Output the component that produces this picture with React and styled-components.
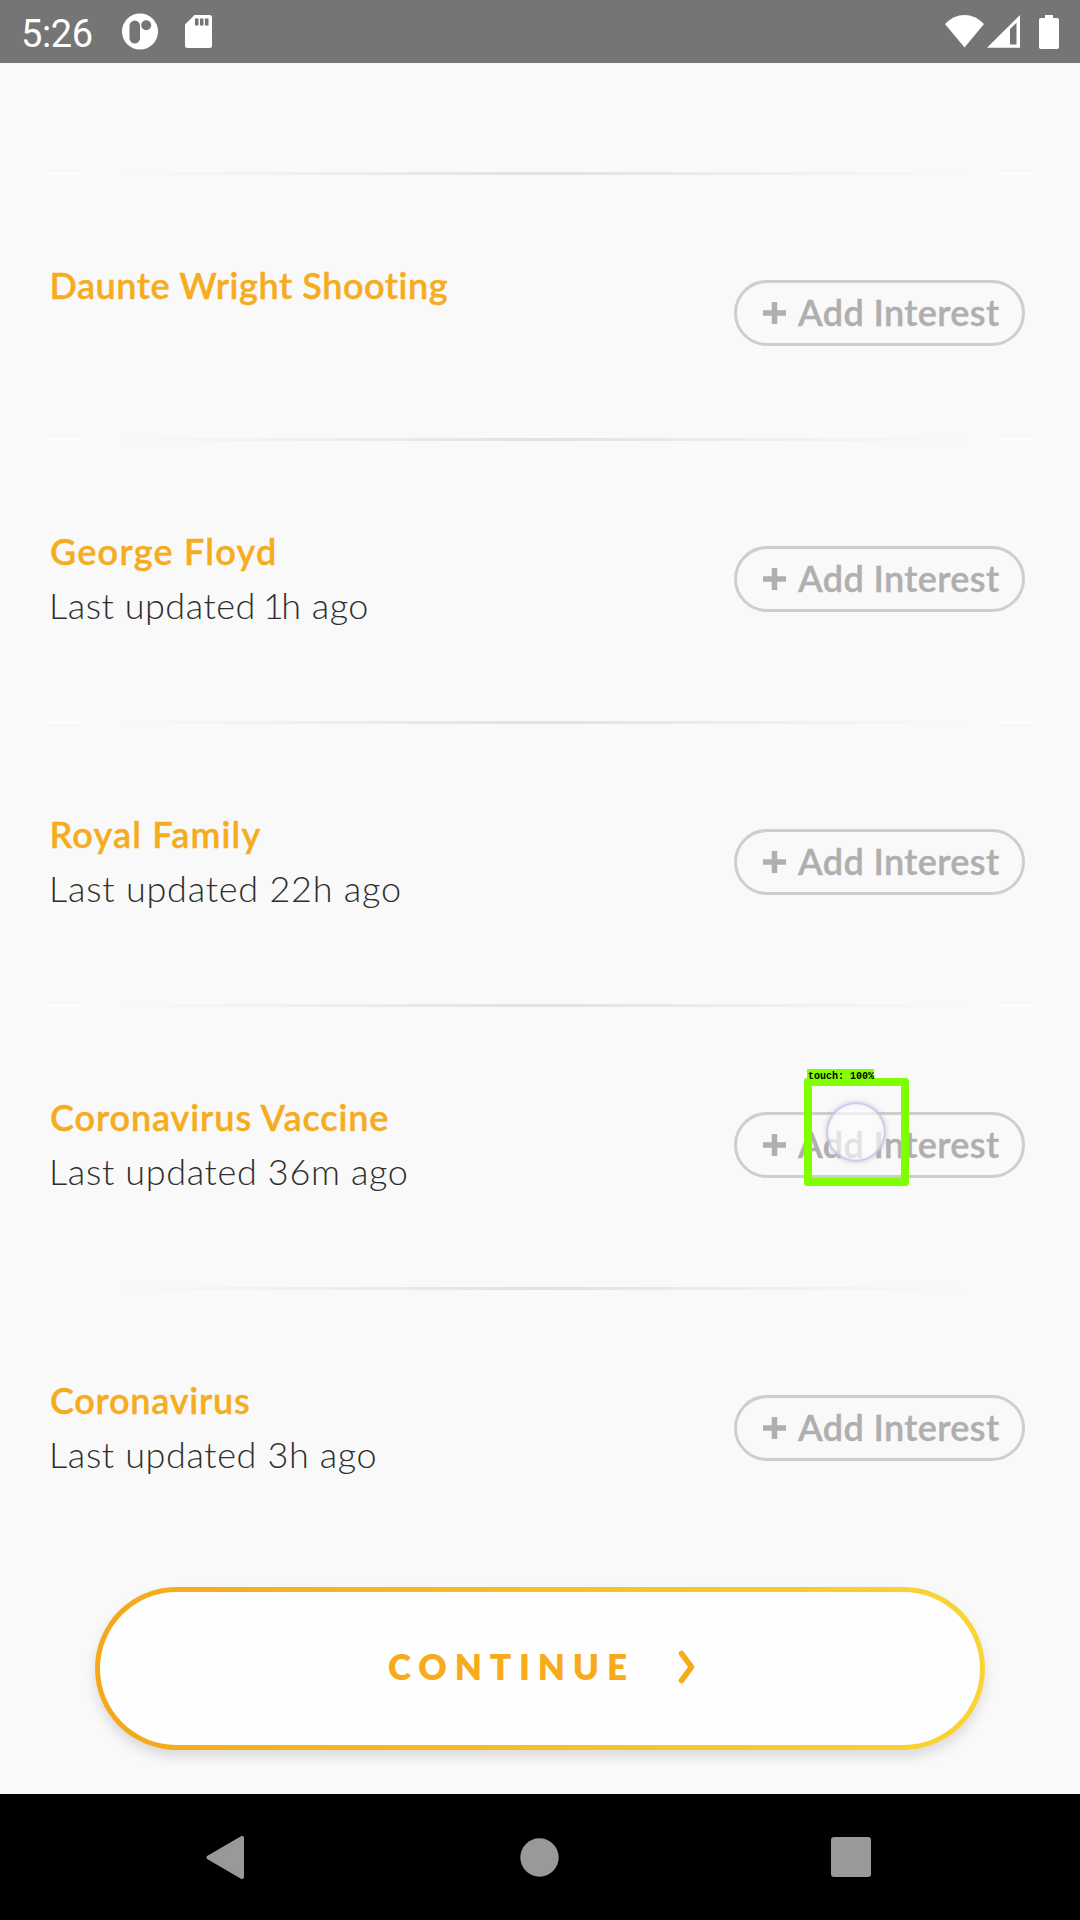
import React from "react";
import styled, { createGlobalStyle } from "styled-components";

const GlobalStyle = createGlobalStyle`
  * { box-sizing: border-box; }
  body { margin: 0; background: #f9f9f9; }
`;

const Screen = styled.div`
  display: flex;
  flex-direction: column;
  width: 1080px;
  height: 1920px;
  overflow: hidden;
  background: #f9f9f9;
  font-family: Lato, "Liberation Sans", sans-serif;
`;

const StatusBar = styled.header`
  display: flex;
  align-items: center;
  flex: none;
  height: 63px;
  padding: 0 21px 0 22px;
  background: #757575;
  color: #fff;
`;

const Clock = styled.span`
  width: 100px;
  padding-top: 4px;
  font-family: Roboto, sans-serif;
  font-size: 38px;
  line-height: 44px;
  letter-spacing: -0.4px;
  text-indent: -1px;
`;

const StatusIcons = styled.div`
  display: flex;
  align-items: center;
  gap: ${(p) => p.$gap}px;
  margin-left: ${(p) => (p.$end ? "auto" : 0)};
`;

const List = styled.main`
  flex: none;
  padding: 109px 48px 0;
`;

const Row = styled.section`
  height: ${(p) => (p.$compact ? 266 : 283)}px;
`;

const Divider = styled.div`
  height: 3px;
  background: linear-gradient(
    90deg,
    ${(p) => p.$edge} 0,
    ${(p) => p.$edge} 3%,
    #f9f9f9 4.5%,
    #f9f9f9 7%,
    #f0f0f0 25%,
    #e1e1e1 50%,
    #f0f0f0 75%,
    #f9f9f9 93%,
    #f9f9f9 95.5%,
    ${(p) => p.$edge} 97%,
    ${(p) => p.$edge} 100%
  );
`;

const RowBody = styled.div`
  display: flex;
  justify-content: space-between;
  align-items: flex-start;
  padding: 88px 7px 0 1px;
`;

const Title = styled.h2`
  margin: 1px 0 0 ${(p) => p.$inset}px;
  color: #f5ac1e;
  font-size: 36px;
  font-weight: 600;
  line-height: 42px;
  letter-spacing: ${(p) => p.$tracking}px;
  white-space: nowrap;
  -webkit-text-stroke: 0.4px #f5ac1e;
`;

const Updated = styled.p`
  margin: 12px 0 0;
  color: #2e2e2e;
  font-size: 36px;
  font-weight: 300;
  line-height: 42px;
  letter-spacing: ${(p) => p.$tracking}px;
  white-space: nowrap;
`;

const NarrowDigit = styled.span`
  letter-spacing: -2.7px;
`;

const ButtonSlot = styled.div`
  position: relative;
  margin-top: 17px;
`;

const AddButton = styled.button`
  display: flex;
  align-items: center;
  width: 291px;
  height: 66px;
  padding: 0 0 0 26px;
  border: 3px solid #cecece;
  border-radius: 33px;
  background: transparent;
  color: #afafaf;
  font-family: inherit;
  font-size: 36px;
  font-weight: 600;
  line-height: 42px;
  letter-spacing: 0.4px;
  white-space: nowrap;
  -webkit-text-stroke: 0.4px #afafaf;
`;

const PlusIcon = styled.svg`
  flex: none;
  margin: 0 12px 1px 0;
`;

const AddLabel = styled.span`
  padding-bottom: 3px;
`;

const TouchBox = styled.div`
  position: absolute;
  left: 70px;
  top: -34px;
  width: 105px;
  height: 108px;
  border: 8px solid #80ff00;
  border-radius: 3px;
`;

const TouchLabel = styled.span`
  position: absolute;
  left: -5px;
  top: -17px;
  width: 67px;
  height: 14px;
  padding: 2px 0 0 1px;
  background: #80ff00;
  color: #000;
  font-family: "Liberation Mono", monospace;
  font-size: 10px;
  font-weight: 700;
  line-height: 12px;
  white-space: nowrap;
`;

const TouchDot = styled.div`
  position: absolute;
  left: 14px;
  top: 16px;
  width: 60px;
  height: 60px;
  border: 2px solid rgba(160, 160, 208, 0.5);
  border-radius: 50%;
  background: rgba(252, 252, 253, 0.66);
  box-shadow: 0 0 4px 1px rgba(170, 170, 225, 0.4), inset 0 0 3px rgba(170, 170, 225, 0.35);
`;

const Footer = styled.footer`
  display: flex;
  justify-content: center;
  flex: 1;
  align-items: flex-start;
  padding-top: 17px;
`;

const ContinueButton = styled.button`
  display: flex;
  align-items: center;
  justify-content: flex-start;
  width: 890px;
  height: 163px;
  padding: 0 0 6px 288px;
  border: 5px solid transparent;
  border-radius: 82px;
  background: linear-gradient(#fefefe, #fefefe) padding-box,
    linear-gradient(90deg, #f4a81c, #f8d534) border-box;
  box-shadow: 0 7px 12px rgba(20, 20, 50, 0.13);
  color: #f7ab1b;
  font-family: inherit;
  font-size: 35px;
  font-weight: 800;
  line-height: 42px;
  letter-spacing: 7.9px;
`;

const Chevron = styled.svg`
  margin: 2px 0 0 43px;
`;

const NavBar = styled.nav`
  display: flex;
  align-items: center;
  justify-content: space-between;
  flex: none;
  height: 126px;
  padding: 0 209px 0 206px;
  background: #000;
`;

const HomeIcon = styled.svg`
  margin-left: 4px;
`;

const topics = [
  { name: "Daunte Wright Shooting", tracking: 0.55, inset: 0.5 },
  { name: "George Floyd", tracking: 1.25, inset: 1, updated: ["Last updated", " 1", "h ago"], subTracking: 0.52 },
  { name: "Royal Family", tracking: 1.15, inset: 0.5, updated: ["Last updated 22h ago"], subTracking: 0.77 },
  { name: "Coronavirus Vaccine", tracking: 0.9, inset: 1, updated: ["Last updated 36m ago"], subTracking: 0.65, touched: true },
  { name: "Coronavirus", tracking: 0.75, inset: 1, updated: ["Last updated 3h ago"], subTracking: 0.62 },
];

function Topic({ topic, last }) {
  const { name, tracking, inset, updated, subTracking, touched } = topic;
  return (
    <Row $compact={!updated}>
      <Divider $edge={last ? "#f9f9f9" : "#fdfdfd"} />
      <RowBody>
        <div>
          <Title $tracking={tracking} $inset={inset}>{name}</Title>
          {updated && (
            <Updated $tracking={subTracking}>
              {updated[0]}
              {updated[1] && <NarrowDigit>{updated[1]}</NarrowDigit>}
              {updated[2]}
            </Updated>
          )}
        </div>
        <ButtonSlot>
          <AddButton>
            <PlusIcon width="23" height="22" viewBox="0 0 23 22">
              <path d="M11.5 0V22M0 11H23" stroke="#afafaf" strokeWidth="5.5" />
            </PlusIcon>
            <AddLabel>Add Interest</AddLabel>
          </AddButton>
          {touched && (
            <TouchBox>
              <TouchLabel>touch: 100%</TouchLabel>
              <TouchDot />
            </TouchBox>
          )}
        </ButtonSlot>
      </RowBody>
    </Row>
  );
}

export default function App() {
  return (
    <Screen>
      <GlobalStyle />
      <StatusBar>
        <Clock>5:26</Clock>
        <StatusIcons $gap={26}>
          <svg width="37" height="37" viewBox="0 0 37 37">
            <circle cx="18" cy="18.5" r="18" fill="#fff" />
            <rect x="7.5" y="7.5" width="10.5" height="23" rx="5.25" fill="#757575" />
            <circle cx="24.2" cy="12.2" r="5" fill="#757575" />
          </svg>
          <svg width="27" height="33" viewBox="0 0 27 33">
            <path d="M9.5 0H24.5Q27 0 27 2.5V30.5Q27 33 24.5 33H2.5Q0 33 0 30.5V9.5Z" fill="#fff" />
            <path d="M10 3.5h3.5v7h-3.5zM15 3.5h3.5v7h-3.5zM20 3.5h3.5v7h-3.5z" fill="#757575" />
          </svg>
        </StatusIcons>
        <StatusIcons $end>
          <svg width="114" height="34" viewBox="0 0 114 34">
            <path d="M0 9Q8.5 0 19.5 0T39 9L19.5 32.5Z" fill="#fff" />
            <path fillRule="evenodd" d="M42 32.8L75 0V32.8ZM65 14V29.5H71.5V7.8Z" fill="#fff" />
            <path d="M100 0h8v3h4q2 0 2 2V32q0 2-2 2H96q-2 0-2-2V5q0-2 2-2h4z" fill="#fff" />
          </svg>
        </StatusIcons>
      </StatusBar>
      <List>
        {topics.map((t, i) => (
          <Topic key={t.name} topic={t} last={i === topics.length - 1} />
        ))}
      </List>
      <Footer>
        <ContinueButton>
          CONTINUE
          <Chevron width="18" height="34" viewBox="0 0 18 34">
            <path d="M3.5 3.5L13.5 17L3.5 30.5" fill="none" stroke="#f7ab1b" strokeWidth="5.5" strokeLinecap="round" strokeLinejoin="round" />
          </Chevron>
        </ContinueButton>
      </Footer>
      <NavBar>
        <svg width="38" height="43" viewBox="0 0 38 43">
          <path d="M36 2V41L2.5 21.5Z" fill="#999" stroke="#999" strokeWidth="4" strokeLinejoin="round" />
        </svg>
        <HomeIcon width="39" height="39" viewBox="0 0 39 39">
          <circle cx="19.5" cy="19.5" r="19.2" fill="#999" />
        </HomeIcon>
        <svg width="40" height="40" viewBox="0 0 40 40">
          <rect width="40" height="40" rx="3" fill="#999" />
        </svg>
      </NavBar>
    </Screen>
  );
}
